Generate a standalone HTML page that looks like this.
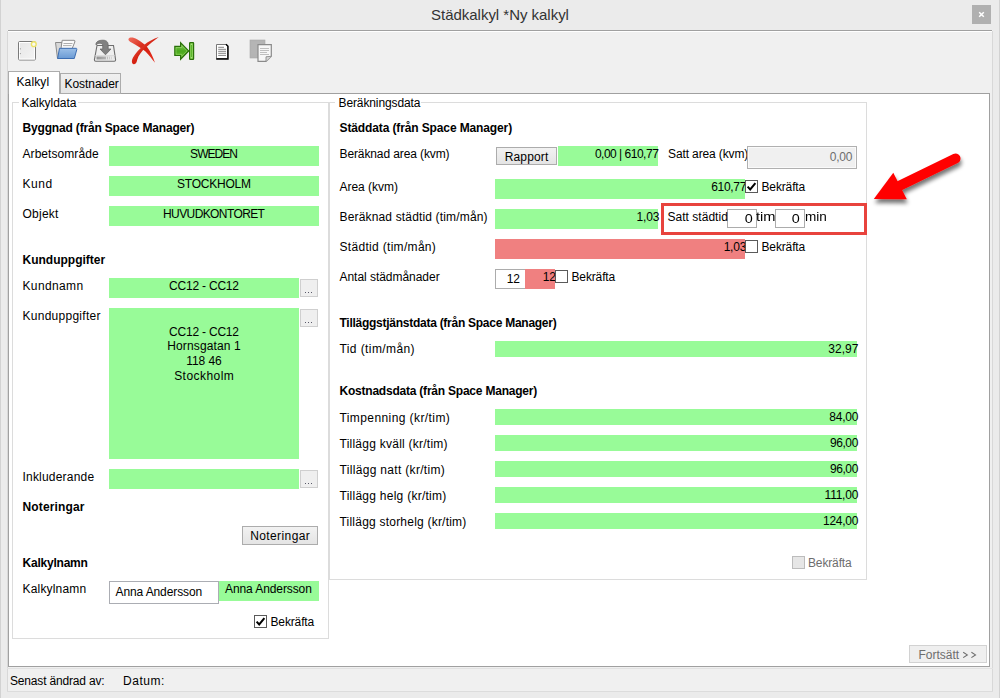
<!DOCTYPE html>
<html><head><meta charset="utf-8"><style>
html,body{margin:0;padding:0;width:1000px;height:698px;overflow:hidden;background:#e9e9e9;}
body{position:relative;font-family:"Liberation Sans", sans-serif;}
div,svg{position:absolute;}
.t{white-space:nowrap;}
</style></head><body>
<div style="left:0px;top:0px;width:1000px;height:698px;background:#ebebeb;"></div>
<div style="left:0px;top:0px;width:1px;height:698px;background:#d2d2d2;"></div>
<div style="left:999px;top:0px;width:1px;height:698px;background:#d2d2d2;"></div>
<div class="t" style="top:6px;font-size:15px;line-height:17px;font-weight:400;color:#333;letter-spacing:-0.025px;left:300px;width:400px;text-align:center;text-indent:-0.025px;">Städkalkyl *Ny kalkyl</div>
<div style="left:972px;top:5px;width:19px;height:19px;background:#b0b0b0;"></div>
<svg style="left:978px;top:11px" width="7" height="7" viewBox="0 0 7 7"><path d="M1.2 1.2L5.8 5.8M5.8 1.2L1.2 5.8" stroke="#fff" stroke-width="1.5"/></svg>
<div style="left:7px;top:30px;width:986px;height:661px;background:#f0f0f0;"></div>
<div style="left:8px;top:30px;width:984px;height:1px;background:#a0a0a0;"></div>
<div style="left:8px;top:31px;width:984px;height:1px;background:#ffffff;"></div>
<div style="left:7px;top:31px;width:1px;height:660px;background:#d8d8d8;"></div>
<div style="left:992px;top:31px;width:1px;height:660px;background:#d8d8d8;"></div>
<div style="left:8px;top:93px;width:982px;height:574px;background:#ffffff;box-sizing:border-box;border:1px solid #a0a0a0;"></div>
<div style="left:60px;top:73px;width:61px;height:21px;background:linear-gradient(#f0f0f0,#e5e5e5);box-sizing:border-box;border:1px solid #acacac;"></div>
<div style="left:8px;top:71px;width:52px;height:23px;background:#ffffff;box-sizing:border-box;border:1px solid #acacac;border-bottom:none;"></div>
<div class="t" style="top:75px;font-size:12px;line-height:14px;font-weight:400;color:#000;letter-spacing:0.12px;left:16.5px;">Kalkyl</div>
<div class="t" style="top:77px;font-size:12px;line-height:14px;font-weight:400;color:#000;letter-spacing:-0.05px;left:64.5px;">Kostnader</div>
<div style="left:7px;top:668px;width:986px;height:1px;background:#e2e2e2;"></div>
<div style="left:7px;top:691px;width:986px;height:1px;background:#dcdcdc;"></div>
<div class="t" style="top:674px;font-size:12px;line-height:14px;font-weight:400;color:#000;letter-spacing:-0.169px;left:10px;">Senast ändrad av:</div>
<div class="t" style="top:674px;font-size:12px;line-height:14px;font-weight:400;color:#000;letter-spacing:0.52px;left:123px;">Datum:</div>
<div style="left:12px;top:102px;width:317px;height:1px;background:#dcdcdc;"></div>
<div style="left:12px;top:102px;width:1px;height:537px;background:#dcdcdc;"></div>
<div style="left:328px;top:102px;width:1px;height:537px;background:#dcdcdc;"></div>
<div style="left:12px;top:638px;width:317px;height:1px;background:#dcdcdc;"></div>
<div style="left:19px;top:99px;width:59px;height:7px;background:#fff;"></div>
<div class="t" style="top:96px;font-size:12px;line-height:14px;font-weight:400;color:#000;letter-spacing:-0.056px;left:21.5px;">Kalkyldata</div>
<div style="left:329px;top:102px;width:538px;height:1px;background:#dcdcdc;"></div>
<div style="left:329px;top:102px;width:1px;height:478px;background:#dcdcdc;"></div>
<div style="left:866px;top:102px;width:1px;height:478px;background:#dcdcdc;"></div>
<div style="left:329px;top:579px;width:538px;height:1px;background:#dcdcdc;"></div>
<div style="left:335px;top:99px;width:86px;height:7px;background:#fff;"></div>
<div class="t" style="top:96px;font-size:12px;line-height:14px;font-weight:400;color:#000;letter-spacing:-0.108px;left:338.5px;">Beräkningsdata</div>
<div class="t" style="top:120.5px;font-size:12px;line-height:14px;font-weight:700;color:#000;letter-spacing:-0.17px;left:22.5px;">Byggnad (från Space Manager)</div>
<div class="t" style="top:147px;font-size:12px;line-height:14px;font-weight:400;color:#000;letter-spacing:0.064px;left:22.5px;">Arbetsområde</div>
<div style="left:109px;top:146px;width:210px;height:20px;background:#98fb98;"></div>
<div class="t" style="top:147px;font-size:12px;line-height:14px;font-weight:400;color:#000;letter-spacing:-0.98px;left:14px;width:400px;text-align:center;text-indent:-0.98px;">SWEDEN</div>
<div class="t" style="top:177px;font-size:12px;line-height:14px;font-weight:400;color:#000;letter-spacing:0.567px;left:22.5px;">Kund</div>
<div style="left:109px;top:176px;width:210px;height:20px;background:#98fb98;"></div>
<div class="t" style="top:177px;font-size:12px;line-height:14px;font-weight:400;color:#000;letter-spacing:-0.225px;left:14px;width:400px;text-align:center;text-indent:-0.225px;">STOCKHOLM</div>
<div class="t" style="top:207px;font-size:12px;line-height:14px;font-weight:400;color:#000;letter-spacing:0.24px;left:22.5px;">Objekt</div>
<div style="left:109px;top:206px;width:210px;height:20px;background:#98fb98;"></div>
<div class="t" style="top:207px;font-size:12px;line-height:14px;font-weight:400;color:#000;letter-spacing:-0.6px;left:14px;width:400px;text-align:center;text-indent:-0.6px;">HUVUDKONTORET</div>
<div class="t" style="top:253px;font-size:12px;line-height:14px;font-weight:700;color:#000;left:22.5px;">Kunduppgifter</div>
<div class="t" style="top:279px;font-size:12px;line-height:14px;font-weight:400;color:#000;letter-spacing:0.371px;left:22.5px;">Kundnamn</div>
<div style="left:109px;top:278px;width:190px;height:20px;background:#98fb98;"></div>
<div class="t" style="top:279px;font-size:12px;line-height:14px;font-weight:400;color:#000;letter-spacing:-0.2px;left:4px;width:400px;text-align:center;text-indent:-0.2px;">CC12 - CC12</div>
<div style="left:300px;top:279px;width:18px;height:18px;background:#efefef;box-sizing:border-box;border:1px solid #cfcfcf;"></div>
<svg style="left:300px;top:279px" width="18" height="18"><rect x="5" y="13" width="1" height="1" fill="#5a5a6a"/><rect x="8" y="13" width="1" height="1" fill="#5a5a6a"/><rect x="11" y="13" width="1" height="1" fill="#5a5a6a"/></svg>
<div class="t" style="top:308.5px;font-size:12px;line-height:14px;font-weight:400;color:#000;letter-spacing:0.267px;left:22.5px;">Kunduppgifter</div>
<div style="left:109px;top:308px;width:190px;height:151px;background:#98fb98;"></div>
<div class="t" style="top:324.5px;font-size:12px;line-height:14px;font-weight:400;color:#000;letter-spacing:-0.2px;left:4px;width:400px;text-align:center;text-indent:-0.2px;">CC12 - CC12</div>
<div class="t" style="top:339.3px;font-size:12px;line-height:14px;font-weight:400;color:#000;letter-spacing:0.136px;left:4px;width:400px;text-align:center;text-indent:0.136px;">Hornsgatan 1</div>
<div class="t" style="top:354.1px;font-size:12px;line-height:14px;font-weight:400;color:#000;letter-spacing:-0.06px;left:4px;width:400px;text-align:center;text-indent:-0.06px;">118 46</div>
<div class="t" style="top:368.9px;font-size:12px;line-height:14px;font-weight:400;color:#000;letter-spacing:0.463px;left:4px;width:400px;text-align:center;text-indent:0.463px;">Stockholm</div>
<div style="left:300px;top:309px;width:18px;height:18px;background:#efefef;box-sizing:border-box;border:1px solid #cfcfcf;"></div>
<svg style="left:300px;top:309px" width="18" height="18"><rect x="5" y="13" width="1" height="1" fill="#5a5a6a"/><rect x="8" y="13" width="1" height="1" fill="#5a5a6a"/><rect x="11" y="13" width="1" height="1" fill="#5a5a6a"/></svg>
<div class="t" style="top:470px;font-size:12px;line-height:14px;font-weight:400;color:#000;letter-spacing:0.2px;left:22.5px;">Inkluderande</div>
<div style="left:109px;top:469px;width:190px;height:20px;background:#98fb98;"></div>
<div style="left:300px;top:470px;width:18px;height:18px;background:#efefef;box-sizing:border-box;border:1px solid #cfcfcf;"></div>
<svg style="left:300px;top:470px" width="18" height="18"><rect x="5" y="13" width="1" height="1" fill="#5a5a6a"/><rect x="8" y="13" width="1" height="1" fill="#5a5a6a"/><rect x="11" y="13" width="1" height="1" fill="#5a5a6a"/></svg>
<div class="t" style="top:500px;font-size:12px;line-height:14px;font-weight:700;color:#000;letter-spacing:0.133px;left:22.5px;">Noteringar</div>
<div style="left:242px;top:526px;width:76px;height:19px;background:linear-gradient(#f2f2f2,#e4e4e4);box-sizing:border-box;border:1px solid #acacac;"></div>
<div class="t" style="top:529px;font-size:12px;line-height:14px;font-weight:400;color:#000;letter-spacing:0.389px;left:80px;width:400px;text-align:center;text-indent:0.389px;">Noteringar</div>
<div class="t" style="top:556px;font-size:12px;line-height:14px;font-weight:700;color:#000;letter-spacing:-0.222px;left:22.5px;">Kalkylnamn</div>
<div class="t" style="top:582px;font-size:12px;line-height:14px;font-weight:400;color:#000;letter-spacing:0.178px;left:22.5px;">Kalkylnamn</div>
<div style="left:109px;top:581px;width:110px;height:23px;background:#fff;box-sizing:border-box;border:1px solid #abadb3;"></div>
<div class="t" style="top:584.5px;font-size:12px;line-height:14px;font-weight:400;color:#000;letter-spacing:-0.108px;left:115.5px;">Anna Andersson</div>
<div style="left:219px;top:581px;width:100px;height:20px;background:#98fb98;"></div>
<div class="t" style="top:582px;font-size:12px;line-height:14px;font-weight:400;color:#000;letter-spacing:-0.092px;left:225px;">Anna Andersson</div>
<div style="left:254px;top:615px;width:13px;height:13px;background:#fff;box-sizing:border-box;border:1px solid #5a5a5a;"></div>
<svg style="left:254px;top:615px" width="13" height="13" viewBox="0 0 13 13"><path d="M2.6 6.6L5.2 9.4L10.4 3.2" fill="none" stroke="#000" stroke-width="2"/></svg>
<div class="t" style="top:615px;font-size:12px;line-height:14px;font-weight:400;color:#000;letter-spacing:-0.143px;left:270.5px;">Bekräfta</div>
<div class="t" style="top:121px;font-size:12px;line-height:14px;font-weight:700;color:#000;letter-spacing:-0.121px;left:339.5px;">Städdata (från Space Manager)</div>
<div class="t" style="top:146.5px;font-size:12px;line-height:14px;font-weight:400;color:#000;letter-spacing:-0.111px;left:339.5px;">Beräknad area (kvm)</div>
<div style="left:496px;top:147px;width:61px;height:18px;background:linear-gradient(#f2f2f2,#e4e4e4);box-sizing:border-box;border:1px solid #acacac;"></div>
<div class="t" style="top:150px;font-size:12px;line-height:14px;font-weight:400;color:#000;letter-spacing:0.15px;left:326.5px;width:400px;text-align:center;text-indent:0.15px;">Rapport</div>
<div style="left:558px;top:146px;width:100px;height:20px;background:#98fb98;"></div>
<div class="t" style="top:147px;font-size:12px;line-height:14px;font-weight:400;color:#000;letter-spacing:-0.492px;right:341.2px;margin-right:0.492px;">0,00 | 610,77</div>
<div class="t" style="top:147px;font-size:12px;line-height:14px;font-weight:400;color:#000;letter-spacing:-0.121px;left:668px;">Satt area (kvm)</div>
<div style="left:747px;top:146px;width:110px;height:23px;background:#f0f0f0;box-sizing:border-box;border:1px solid #b0b0b0;box-shadow:inset 0 0 0 1px #fafafa;"></div>
<div class="t" style="top:150px;font-size:12px;line-height:14px;font-weight:400;color:#6d6d6d;letter-spacing:-0.267px;right:147.7px;margin-right:0.267px;">0,00</div>
<div class="t" style="top:180px;font-size:12px;line-height:14px;font-weight:400;color:#000;letter-spacing:-0.022px;left:339.5px;">Area (kvm)</div>
<div style="left:495px;top:179px;width:250px;height:20px;background:#98fb98;"></div>
<div class="t" style="top:180px;font-size:12px;line-height:14px;font-weight:400;color:#000;letter-spacing:-0.32px;right:253.7px;margin-right:0.32px;">610,77</div>
<div style="left:745px;top:180px;width:13px;height:13px;background:#fff;box-sizing:border-box;border:1px solid #5a5a5a;"></div>
<svg style="left:745px;top:180px" width="13" height="13" viewBox="0 0 13 13"><path d="M2.6 6.6L5.2 9.4L10.4 3.2" fill="none" stroke="#000" stroke-width="2"/></svg>
<div class="t" style="top:179.5px;font-size:12px;line-height:14px;font-weight:400;color:#000;letter-spacing:-0.143px;left:761.5px;">Bekräfta</div>
<div class="t" style="top:210px;font-size:12px;line-height:14px;font-weight:400;color:#000;letter-spacing:0.16px;left:339.5px;">Beräknad städtid (tim/mån)</div>
<div style="left:495px;top:209px;width:163px;height:20px;background:#98fb98;"></div>
<div class="t" style="top:210px;font-size:12px;line-height:14px;font-weight:400;color:#000;letter-spacing:-0.2px;right:340.7px;margin-right:0.2px;">1,03</div>
<div style="left:727px;top:209px;width:30px;height:19px;background:#fff;box-sizing:border-box;border:1px solid #acacac;"></div>
<div style="left:775px;top:209px;width:30px;height:19px;background:#fff;box-sizing:border-box;border:1px solid #acacac;"></div>
<div class="t" style="top:210px;font-size:12px;line-height:14px;font-weight:400;color:#000;letter-spacing:0.027px;left:667.5px;">Satt städtid</div>
<div class="t" style="top:212px;font-size:12px;line-height:14px;font-weight:400;color:#000;right:247.7px;transform:scaleX(1.2);transform-origin:100% 0;">0</div>
<div class="t" style="top:210px;font-size:12px;line-height:14px;font-weight:400;color:#000;left:756.3px;transform:scaleX(1.221);transform-origin:0 0;">tim</div>
<div class="t" style="top:212px;font-size:12px;line-height:14px;font-weight:400;color:#000;right:200.2px;transform:scaleX(1.2);transform-origin:100% 0;">0</div>
<div class="t" style="top:210px;font-size:12px;line-height:14px;font-weight:400;color:#000;left:804.6px;transform:scaleX(1.129);transform-origin:0 0;">min</div>
<div style="left:661px;top:203px;width:206px;height:32px;box-sizing:border-box;border:3px solid #e8433d;"></div>
<div class="t" style="top:240px;font-size:12px;line-height:14px;font-weight:400;color:#000;letter-spacing:0.312px;left:339.5px;">Städtid (tim/mån)</div>
<div style="left:495px;top:239px;width:250px;height:20px;background:#f08080;"></div>
<div class="t" style="top:240px;font-size:12px;line-height:14px;font-weight:400;color:#000;letter-spacing:-0.233px;right:253.7px;margin-right:0.233px;">1,03</div>
<div style="left:745px;top:240px;width:13px;height:13px;background:#fff;box-sizing:border-box;border:1px solid #5a5a5a;"></div>
<div class="t" style="top:240px;font-size:12px;line-height:14px;font-weight:400;color:#000;letter-spacing:-0.143px;left:761.5px;">Bekräfta</div>
<div class="t" style="top:270px;font-size:12px;line-height:14px;font-weight:400;color:#000;letter-spacing:-0.037px;left:339.5px;">Antal städmånader</div>
<div style="left:495px;top:269px;width:30px;height:20px;background:#fff;box-sizing:border-box;border:1px solid #acacac;border-right:none;"></div>
<div class="t" style="top:272px;font-size:12px;line-height:14px;font-weight:400;color:#000;letter-spacing:-0.2px;right:480.2px;margin-right:0.2px;">12</div>
<div style="left:525px;top:269px;width:30px;height:20px;background:#f08080;"></div>
<div class="t" style="top:270px;font-size:12px;line-height:14px;font-weight:400;color:#000;letter-spacing:-0.2px;right:444.2px;margin-right:0.2px;">12</div>
<div style="left:555px;top:270px;width:13px;height:13px;background:#fff;box-sizing:border-box;border:1px solid #5a5a5a;"></div>
<div class="t" style="top:270px;font-size:12px;line-height:14px;font-weight:400;color:#000;letter-spacing:-0.143px;left:571.5px;">Bekräfta</div>
<div class="t" style="top:316px;font-size:12px;line-height:14px;font-weight:700;color:#000;letter-spacing:-0.263px;left:339.5px;">Tilläggstjänstdata (från Space Manager)</div>
<div class="t" style="top:342px;font-size:12px;line-height:14px;font-weight:400;color:#000;letter-spacing:0.408px;left:339.5px;">Tid (tim/mån)</div>
<div style="left:495px;top:341px;width:362px;height:16px;background:#98fb98;"></div>
<div class="t" style="top:342px;font-size:12px;line-height:14px;font-weight:400;color:#000;right:141.7px;">32,97</div>
<div class="t" style="top:384px;font-size:12px;line-height:14px;font-weight:700;color:#000;letter-spacing:-0.219px;left:339.5px;">Kostnadsdata (från Space Manager)</div>
<div class="t" style="top:410.5px;font-size:12px;line-height:14px;font-weight:400;color:#000;letter-spacing:0.411px;left:339.5px;">Timpenning (kr/tim)</div>
<div style="left:495px;top:409px;width:362px;height:16px;background:#98fb98;"></div>
<div class="t" style="top:410px;font-size:12px;line-height:14px;font-weight:400;color:#000;letter-spacing:-0.25px;right:141.7px;margin-right:0.25px;">84,00</div>
<div class="t" style="top:436.5px;font-size:12px;line-height:14px;font-weight:400;color:#000;letter-spacing:0.248px;left:339.5px;">Tillägg kväll (kr/tim)</div>
<div style="left:495px;top:435px;width:362px;height:16px;background:#98fb98;"></div>
<div class="t" style="top:436px;font-size:12px;line-height:14px;font-weight:400;color:#000;letter-spacing:-0.4px;right:141.7px;margin-right:0.4px;">96,00</div>
<div class="t" style="top:462.5px;font-size:12px;line-height:14px;font-weight:400;color:#000;letter-spacing:0.32px;left:339.5px;">Tillägg natt (kr/tim)</div>
<div style="left:495px;top:461px;width:362px;height:16px;background:#98fb98;"></div>
<div class="t" style="top:462px;font-size:12px;line-height:14px;font-weight:400;color:#000;letter-spacing:-0.4px;right:141.7px;margin-right:0.4px;">96,00</div>
<div class="t" style="top:488.5px;font-size:12px;line-height:14px;font-weight:400;color:#000;letter-spacing:0.26px;left:339.5px;">Tillägg helg (kr/tim)</div>
<div style="left:495px;top:487px;width:362px;height:16px;background:#98fb98;"></div>
<div class="t" style="top:488px;font-size:12px;line-height:14px;font-weight:400;color:#000;letter-spacing:-0.24px;right:141.7px;margin-right:0.24px;">111,00</div>
<div class="t" style="top:514.5px;font-size:12px;line-height:14px;font-weight:400;color:#000;letter-spacing:0.217px;left:339.5px;">Tillägg storhelg (kr/tim)</div>
<div style="left:495px;top:513px;width:362px;height:16px;background:#98fb98;"></div>
<div class="t" style="top:514px;font-size:12px;line-height:14px;font-weight:400;color:#000;letter-spacing:-0.3px;right:141.7px;margin-right:0.3px;">124,00</div>
<div style="left:792px;top:556px;width:13px;height:13px;background:#e6e6e6;box-sizing:border-box;border:1px solid #bcbcbc;"></div>
<div class="t" style="top:556px;font-size:12px;line-height:14px;font-weight:400;color:#6d6d6d;letter-spacing:-0.143px;left:808px;">Bekräfta</div>
<div style="left:909px;top:645px;width:78px;height:18px;background:#efefef;box-sizing:border-box;border:1px solid #d2d2d2;"></div>
<div class="t" style="top:648px;font-size:12px;line-height:14px;font-weight:400;color:#6d6d6d;left:918.5px;">Fortsätt</div>
<svg style="left:961px;top:650px" width="18" height="10"><path d="M2.2 2.2L6.3 4.9L2.2 7.6M10.4 2.2L14.5 4.9L10.4 7.6" fill="none" stroke="#6d6d6d" stroke-width="1.1"/></svg>
<svg style="left:860px;top:140px" width="110" height="75" viewBox="860 140 110 75">
<defs><filter id="sh" x="-20%" y="-20%" width="140%" height="160%"><feGaussianBlur in="SourceAlpha" stdDeviation="2"/><feOffset dx="1" dy="4"/><feComponentTransfer><feFuncA type="linear" slope="0.55"/></feComponentTransfer><feMerge><feMergeNode/><feMergeNode in="SourceGraphic"/></feMerge></filter></defs>
<g filter="url(#sh)">
<line x1="955.5" y1="158.5" x2="898" y2="186.5" stroke="#ff0000" stroke-width="10" stroke-linecap="round"/>
<polygon points="873.8,199 893.3,172.8 906.8,199.3" fill="#ff0000"/>
</g></svg>
<svg style="left:10px;top:34px" width="270" height="32" viewBox="10 34 270 32">
<defs>
<linearGradient id="gdoc" x1="0" y1="0" x2="1" y2="1"><stop offset="0" stop-color="#e6e6e6"/><stop offset="1" stop-color="#f4f4f4"/></linearGradient>
<linearGradient id="gblue" x1="0" y1="0" x2="0" y2="1"><stop offset="0" stop-color="#9cc0e8"/><stop offset="1" stop-color="#6a9ad4"/></linearGradient>
<linearGradient id="gred" x1="0" y1="0" x2="1" y2="1"><stop offset="0" stop-color="#f07060"/><stop offset="0.5" stop-color="#d42010"/><stop offset="1" stop-color="#e83020"/></linearGradient>
<linearGradient id="ggreen" x1="0" y1="0" x2="0" y2="1"><stop offset="0" stop-color="#8ad05a"/><stop offset="0.5" stop-color="#4aa81e"/><stop offset="1" stop-color="#6cc030"/></linearGradient>
<linearGradient id="gslot" x1="0" y1="0" x2="1" y2="0"><stop offset="0" stop-color="#888"/><stop offset="0.5" stop-color="#aaa"/><stop offset="1" stop-color="#ddd"/></linearGradient>
</defs>
<!-- new -->
<rect x="18.5" y="41.5" width="17" height="18.5" rx="1.2" fill="url(#gdoc)" stroke="#7a7a7a" stroke-width="1"/>
<rect x="19.5" y="42.5" width="15" height="16.5" fill="none" stroke="#fff" stroke-width="1"/>
<circle cx="20.4" cy="48.8" r="0.6" fill="#999"/><circle cx="20.4" cy="53.6" r="0.6" fill="#999"/>
<circle cx="33.8" cy="44.2" r="2.4" fill="#fafaf0" stroke="#ece36a" stroke-width="1.4"/>
<!-- open -->
<path d="M55.5,42.5 L62,42.5 L62,46 L60,58.5 L57.5,58.5 Z" fill="#d8d8d8" stroke="#8a8a8a" stroke-width="1"/>
<path d="M62.2,40.3 L74.2,40.3 Q75.4,40.5 74.8,42 L72.2,48.5 L61,48.5 Z" fill="#fbfbfb" stroke="#8a8a8a" stroke-width="1"/>
<path d="M63.5,43.5 L72.5,43.5 M63,45.6 L71.5,45.6" stroke="#a5a5a5" stroke-width="0.9"/>
<path d="M59.5,48.3 L76.3,48.3 Q77,48.5 76.8,49.5 L74.3,58.5 L57.6,58.5 Z" fill="url(#gblue)" stroke="#3c6db2" stroke-width="1"/>
<!-- save -->
<path d="M97,45.5 L113.5,45.5 L115.6,59.8 Q115.6,61.2 114.3,61.2 L95.7,61.2 Q94.4,61.2 94.4,59.8 Z" fill="#efefef" stroke="#6e6e6e" stroke-width="1.1"/>
<path d="M95,55.7 L115,55.7" stroke="#d0d0d0" stroke-width="0.8"/>
<rect x="96.5" y="56.5" width="17" height="3" fill="url(#gslot)" opacity="0.9"/>
<path d="M106.5,56.5 L106.5,59.5 M108.5,56.5 L108.5,59.5 M110.5,56.5 L110.5,59.5 M112.5,56.5 L112.5,59.5" stroke="#f4f4f4" stroke-width="0.7"/>
<path d="M96,45 C95.5,41.5 99,40.2 103,40.2 C107,40.2 108.2,42.5 108.2,45.5 L108.2,49 L111,49 L105.5,54.8 L100,49 L102.7,49 L102.7,45.5 C102.7,43.8 101.5,43.3 99.8,43.3 C98,43.3 97,44 96,45 Z" fill="#808080" stroke="#606060" stroke-width="0.7"/>
<!-- red X -->
<path d="M128.5,39 C129.5,36.8 133.5,37.2 137,39.2 C141,41.6 144.5,44 147.5,47.5 C150.5,51.5 153,57 155,62.8 C152,59 149,55 145.5,51.5 C141.5,48 136,45.2 131.5,42.5 C129.5,41.3 128,40.3 128.5,39 Z" fill="url(#gred)"/>
<path d="M158.8,37 C153.5,38.6 148,41.8 144,45 C139.5,48.8 135.5,53 133,57.5 C131.3,60.7 131.6,64 133.8,64.2 C136,64.4 136.8,62 137.3,59.5 C138.3,55.8 141.5,51.5 145,48.3 C149,44.6 154,40.4 158.8,37 Z" fill="url(#gred)"/>
<!-- green arrow -->
<path d="M174.8,46.3 L180.6,46.3 L180.6,42.8 L188.7,50.9 L180.6,59.2 L180.6,55.5 L174.8,55.5 Z" fill="url(#ggreen)" stroke="#2a700a" stroke-width="1.2" stroke-linejoin="miter"/>
<path d="M176,47.5 L181.8,47.5 L181.8,45.6 L187,50.9 L181.8,56.3 L181.8,54.3 L176,54.3 Z" fill="none" stroke="#a8e080" stroke-width="0.6" opacity="0.8"/>
<rect x="189.6" y="42.6" width="4" height="16.8" rx="0.6" fill="#6cc030" stroke="#2a700a" stroke-width="1.2"/>
<rect x="190.8" y="43.8" width="1.6" height="14.4" fill="#5ab52a" stroke="#a8e080" stroke-width="0.5"/>
<!-- document -->
<path d="M216.5,44.5 L226,44.5 L227.5,46 L227.5,58.5 L216.5,58.5 Z" fill="#fff" stroke="#777" stroke-width="1"/>
<path d="M226,44.3 L228,46.3 L228,59 L216.2,59" fill="none" stroke="#000" stroke-width="1.4"/>
<path d="M218.2,47.3 L224,47.3 M218.2,49.3 L226,49.3 M218.2,51.3 L226,51.3 M218.2,53.3 L226,53.3 M218.2,55.4 L226,55.4" stroke="#777" stroke-width="0.9"/>
<!-- copy -->
<rect x="250" y="40" width="15" height="18" fill="#b4b4b4" stroke="#a8a8a8" stroke-width="0.6"/>
<path d="M251.5,43 L262,43 M251.5,45 L262,45 M251.5,47 L262,47 M251.5,49 L262,49 M251.5,51 L262,51 M251.5,53 L262,53" stroke="#bababa" stroke-width="0.6"/>
<path d="M258,44.7 L271.3,44.7 L271.3,56.3 L266,61.3 L258,61.3 Z" fill="#f7f7f7" stroke="#8a8a8a" stroke-width="1.2"/>
<path d="M266,61.3 L266,56.8 L271.3,56.3" fill="#d8d8d8" stroke="#8a8a8a" stroke-width="0.9"/>
<path d="M260,48.5 L269,48.5 M260,50.5 L269,50.5 M260,52.5 L267,52.5 M260,54.5 L269,54.5" stroke="#b0b0b0" stroke-width="0.8"/>
</svg>
</body></html>
